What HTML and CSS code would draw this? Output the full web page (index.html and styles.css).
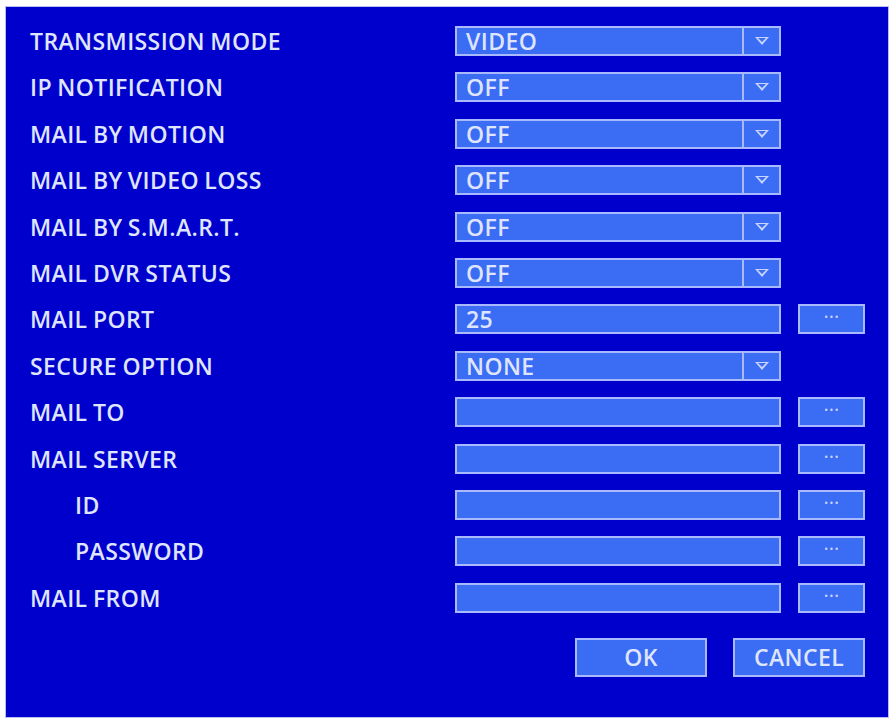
FILE: index.html
```html
<!DOCTYPE html>
<html lang="en">

<head>
    <meta charset="UTF-8">
    <title>Mail Setup</title>
    <link rel="stylesheet" href="styles.css">
</head>

<body>
    <div class="panel">
        <div class="form_grid">
            <div class="label">TRANSMISSION MODE</div>
            <div class="box select"><span class="val">VIDEO</span><span class="arrow"><i></i></span></div>
            <div></div>

            <div class="label">IP NOTIFICATION</div>
            <div class="box select"><span class="val">OFF</span><span class="arrow"><i></i></span></div>
            <div></div>

            <div class="label">MAIL BY MOTION</div>
            <div class="box select"><span class="val">OFF</span><span class="arrow"><i></i></span></div>
            <div></div>

            <div class="label">MAIL BY VIDEO LOSS</div>
            <div class="box select"><span class="val">OFF</span><span class="arrow"><i></i></span></div>
            <div></div>

            <div class="label">MAIL BY S.M.A.R.T.</div>
            <div class="box select"><span class="val">OFF</span><span class="arrow"><i></i></span></div>
            <div></div>

            <div class="label">MAIL DVR STATUS</div>
            <div class="box select"><span class="val">OFF</span><span class="arrow"><i></i></span></div>
            <div></div>

            <div class="label">MAIL PORT</div>
            <div class="box"><span class="val">25</span></div>
            <div class="box dots">···</div>

            <div class="label">SECURE OPTION</div>
            <div class="box select"><span class="val">NONE</span><span class="arrow"><i></i></span></div>
            <div></div>

            <div class="label">MAIL TO</div>
            <div class="box"></div>
            <div class="box dots">···</div>

            <div class="label">MAIL SERVER</div>
            <div class="box"></div>
            <div class="box dots">···</div>

            <div class="label sub">ID</div>
            <div class="box"></div>
            <div class="box dots">···</div>

            <div class="label sub">PASSWORD</div>
            <div class="box"></div>
            <div class="box dots">···</div>

            <div class="label">MAIL FROM</div>
            <div class="box"></div>
            <div class="box dots">···</div>
        </div>

        <div class="btn_row">
            <div class="box btn">OK</div>
            <div class="box btn">CANCEL</div>
        </div>
    </div>
</body>

</html>
```

FILE: styles.css
```css
* {
    margin: 0px;
    padding: 0px;
    box-sizing: border-box;
}

body {
    background: white;
    font-family: "Open Sans", Lato, sans-serif;
    color: #dfe5ff;
}

.panel {
    width: 884px;
    height: 712px;
    margin-left: 5px;
    margin-top: 6px;
    background: #0000cc;
    border: 1px solid #b9bdf0;
    padding: 19px 0px 0px 24px;
}

.form_grid {
    display: grid;
    grid-template-columns: 408px 326px 67px;
    grid-auto-rows: 30px;
    column-gap: 17px;
    row-gap: 16.4px;
    align-items: center;
}

.label {
    font-size: 23px;
    font-weight: 600;
    letter-spacing: 0.4px;
    word-spacing: -1px;
    white-space: nowrap;
}

.label.sub {
    padding-left: 45px;
}

.box {
    height: 30px;
    background: #3a6cf4;
    border: 2px solid #a9b9ff;
    display: flex;
    align-items: center;
}

.val {
    flex: 1;
    padding-left: 9px;
    font-size: 23px;
    font-weight: 600;
    letter-spacing: 0.4px;
}

.arrow {
    width: 37px;
    height: 100%;
    border-left: 2px solid #a9b9ff;
    display: flex;
    align-items: center;
    justify-content: center;
}

.arrow i {
    width: 0;
    height: 0;
    border-left: 7px solid transparent;
    border-right: 7px solid transparent;
    border-top: 8px solid #c9d3ff;
    position: relative;
}

.arrow i::after {
    content: "";
    position: absolute;
    left: -4px;
    top: -7px;
    border-left: 4px solid transparent;
    border-right: 4px solid transparent;
    border-top: 4.5px solid #3a6cf4;
}

.dots {
    justify-content: center;
    font-size: 20px;
    line-height: 1;
    color: #c9d3ff;
    letter-spacing: 0px;
    padding-bottom: 4px;
}

.btn_row {
    display: flex;
    gap: 26px;
    margin-top: 25px;
    margin-left: 545px;
}

.btn {
    width: 132px;
    height: 39px;
    justify-content: center;
    font-size: 23px;
    font-weight: 600;
    letter-spacing: 0.4px;
}
```
